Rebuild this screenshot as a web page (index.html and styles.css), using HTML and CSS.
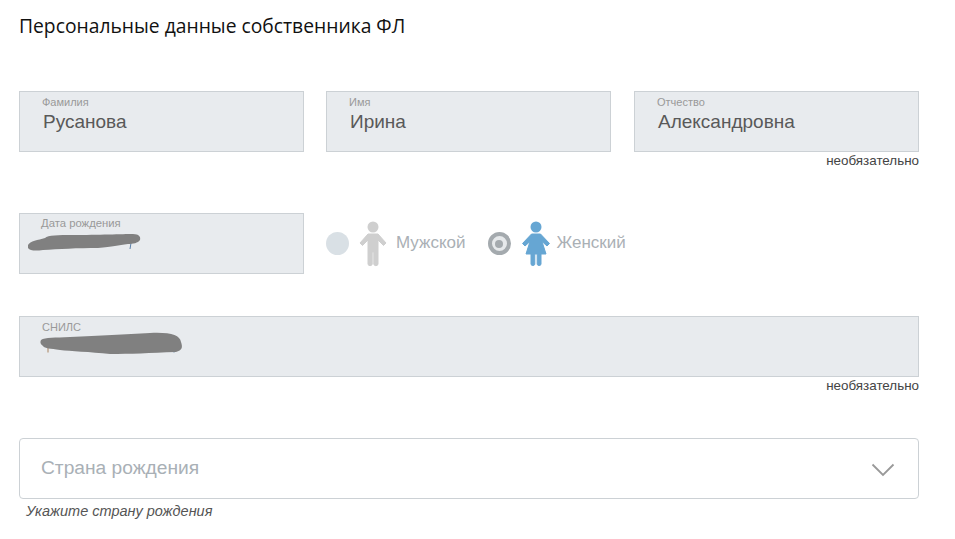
FILE: index.html
```html
<!DOCTYPE html>
<html lang="ru">
<head>
<meta charset="utf-8">
<title>Персональные данные</title>
<link rel="stylesheet" href="styles.css">
</head>
<body>
<main class="form">
  <h1 class="title">Персональные данные собственника ФЛ</h1>

  <div class="row-names">
    <div class="cell">
      <div class="field"><span class="label">Фамилия</span><span class="value">Русанова</span></div>
    </div>
    <div class="cell">
      <div class="field"><span class="label">Имя</span><span class="value">Ирина</span></div>
    </div>
    <div class="cell">
      <div class="field"><span class="label">Отчество</span><span class="value">Александровна</span></div>
      <div class="optional">необязательно</div>
    </div>
  </div>

  <div class="row-birth">
    <div class="field">
      <span class="label label-birth">Дата рождения</span>
      <svg class="scribble scribble-date" width="114" height="22" viewBox="0 0 114 22"><path d="M103 12L102 18" stroke="#5a7fa8" stroke-width="1"/><path d="M0 14C2 10 10 9 17 7C20 4 30 4 45 4C70 4 95 3 105 3C111 3 113 6 112 9C110 12 105 13 100 13C90 14 85 16 70 17C50 17 30 18 15 19C8 20 2 20 0 17Z" fill="#808080"/></svg>
    </div>
    <div class="gender">
      <span class="radio radio-m"></span>
      <svg class="person" width="30" height="46" viewBox="0 0 30 46"><circle cx="15" cy="6" r="5.500" fill="#cfcfcf"/><path d="M10 13H20L28 22L25.500 24.500L20 19V43.500A2.500 2.500 0 0 1 15.800 43.500V31H14.200V43.500A2.500 2.500 0 0 1 10 43.500V19L4.500 24.500L2 22Z" fill="#cfcfcf" stroke="#cfcfcf" stroke-linejoin="round"/></svg>
      <span class="gender-text text-m">Мужской</span>
    </div>
    <div class="gender gender-f">
      <span class="radio radio-on"><span class="radio-dot"></span></span>
      <svg class="person" width="30" height="46" viewBox="0 0 30 46"><circle cx="15" cy="6" r="5.500" fill="#66a6d3"/><path d="M10.500 13H19.500L28.500 22.500L26 25L21 20.500L25 33H20V43.500A2.300 2.300 0 0 1 16.200 43.500V33H13.800V43.500A2.300 2.300 0 0 1 10 43.500V33H5L9 20.500L4 25L1.500 22.500Z" fill="#66a6d3" stroke="#66a6d3" stroke-linejoin="round"/></svg>
      <span class="gender-text text-f">Женский</span>
    </div>
  </div>

  <div class="row-snils">
    <div class="field">
      <span class="label">СНИЛС</span>
      <svg class="scribble scribble-snils" width="144" height="24" viewBox="0 0 144 24"><path d="M8 15V20.500" stroke="#a8825f" stroke-width="1"/><path d="M134 17V20.500" stroke="#5a7fa8" stroke-width="1"/><path d="M1 8C5 5 15 6 30 5C60 4 85 2 110 1C130 0 140 3 141 10C143 16 142 18 136 20C110 21 90 22 70 22C50 20 30 19 20 18C10 16 5 17 3 14C0 12 0 10 1 8Z" fill="#808080"/></svg>
    </div>
    <div class="optional">необязательно</div>
  </div>

  <div class="select">
    <span class="select-text">Страна рождения</span>
    <svg class="chevron" width="24" height="14" viewBox="0 0 24 14"><path d="M1.500 1.500L12 12L22.500 1.500" fill="none" stroke="#999" stroke-width="1.800"/></svg>
  </div>
  <div class="hint">Укажите страну рождения</div>
</main>
</body>
</html>
```

FILE: styles.css
```css
* {
  box-sizing: border-box;
}

body {
  margin: 0;
  background: #fff;
  font-family: "Liberation Sans", Arial, sans-serif;
  color: #333;
}

.form {
  width: 900px;
  margin-left: 19px;
  padding-top: 13px;
}

.title {
  margin: 0 0 53px;
  height: 25px;
  font-family: "Open Sans", sans-serif;
  font-size: 19.300px;
  line-height: 25px;
  font-weight: 400;
  color: #111;
}

.row-names {
  display: grid;
  grid-template-columns: 307px 308px 285px;
  height: 122px;
}

.cell {
  width: 285px;
}

.field {
  position: relative;
  height: 61px;
  padding: 4px 0 0 22px;
  background: #e8ebee;
  border: 1px solid #ccd1d5;
}

.label {
  display: block;
  height: 13px;
  font-size: 11px;
  line-height: 13px;
  color: #999;
}

.label-birth {
  margin: -1px 0 0 -1px;
  font-size: 11.300px;
}

.value {
  display: block;
  margin: 1px 0 0 1px;
  font-size: 19px;
  line-height: 24px;
  color: #595959;
}

.optional {
  height: 18px;
  font-size: 13.400px;
  line-height: 18px;
  text-align: right;
  color: #444;
}

.row-birth {
  display: flex;
  align-items: center;
  height: 61px;
  margin-bottom: 42px;
}

.row-birth > .field {
  width: 285px;
  flex: none;
  margin-right: 22px;
}

.scribble {
  position: absolute;
}

.scribble-date {
  left: 8px;
  top: 17px;
}

.scribble-snils {
  left: 20px;
  top: 15px;
}

.gender {
  display: flex;
  align-items: center;
  height: 46px;
  font-size: 17px;
  color: #aab0b5;
}

.gender-f {
  margin-left: 22px;
}

.radio {
  display: flex;
  align-items: center;
  justify-content: center;
  width: 23px;
  height: 23px;
  border-radius: 50%;
  background: #d9e0e5;
}

.radio-m {
  margin-right: 9px;
}

.radio-on {
  margin-right: 10px;
  background: #e6e9eb;
  border: 4px solid #a4aaae;
}

.radio-dot {
  width: 8px;
  height: 8px;
  border-radius: 50%;
  background: #a4aaae;
}

.person {
  flex: none;
  margin-top: 1px;
}

.gender-text {
  margin-top: -2px;
}

.text-m {
  margin-left: 8px;
}

.text-f {
  margin-left: 6px;
}

.row-snils {
  height: 122px;
}

.select {
  display: flex;
  align-items: center;
  justify-content: space-between;
  height: 61px;
  padding: 0 23px 0 21px;
  border: 1px solid #ccd1d5;
  border-radius: 4px;
  background: #fff;
}

.select-text {
  margin-top: -2px;
  font-size: 19.200px;
  color: #a9b0b6;
}

.chevron {
  margin-top: 2px;
}

.hint {
  margin: 3px 0 0 7px;
  font-size: 14.500px;
  line-height: 18px;
  font-style: italic;
  color: #555;
}
```
